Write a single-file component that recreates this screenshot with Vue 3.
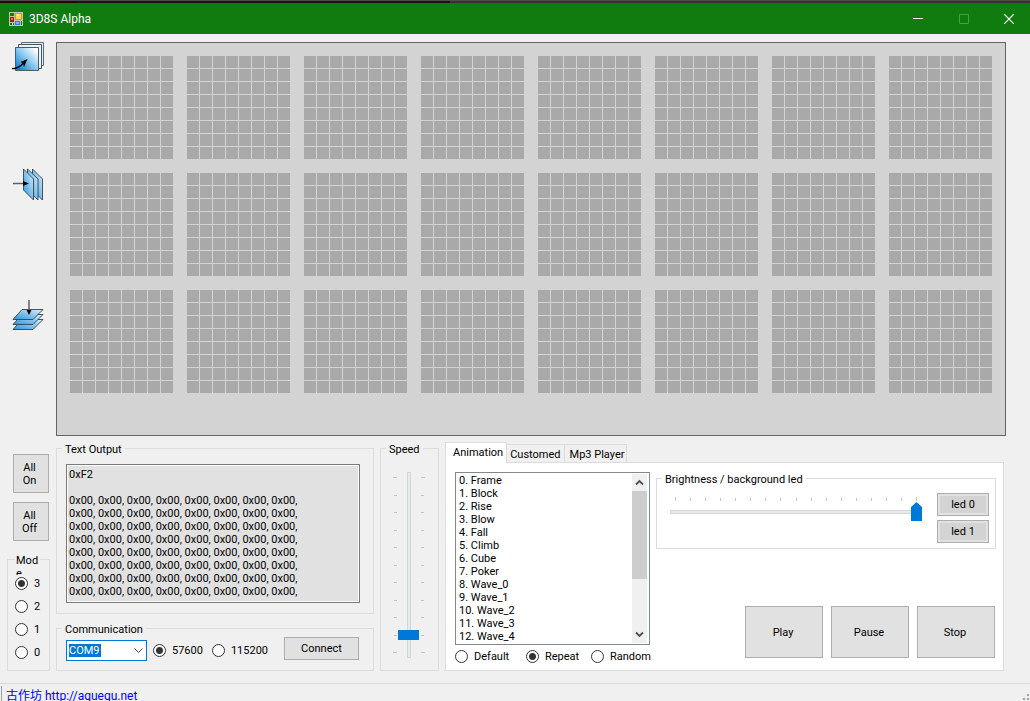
<script setup>
import { ref } from 'vue'

const matrices = Array.from({ length: 24 }, (_, i) => i)

const outputText = ['0xF2', '']
  .concat(Array.from({ length: 8 }, () => Array(8).fill('0x00,').join(' ')))
  .join('\n')

const animations = [
  'Frame', 'Block', 'Rise', 'Blow', 'Fall', 'Climb', 'Cube', 'Poker',
  'Wave_0', 'Wave_1', 'Wave_2', 'Wave_3', 'Wave_4',
]
const animation = ref(null)

const modes = ['3', '2', '1', '0']
const mode = ref('3')
const bauds = ['57600', '115200']
const baud = ref('57600')
const orders = ['Default', 'Repeat', 'Random']
const order = ref('Repeat')
const port = ref('COM9')
const speed = ref(9)
const brightness = ref(16)
const tabs = ['Animation', 'Customed', 'Mp3 Player']
const tab = ref('Animation')
</script>

<template>
  <div class="window">
    <div class="backdrop"></div>
    <header class="titlebar">
      <svg class="app-icon" width="14" height="14" viewBox="0 0 14 14" shape-rendering="crispEdges">
        <rect width="14" height="14" fill="#c4c4b4" />
        <rect x="1" y="1" width="4" height="3" fill="#107c10" />
        <rect x="6" y="1" width="7" height="7" fill="#d99a10" />
        <rect x="7" y="2" width="5" height="5" fill="#ffd84a" />
        <rect x="8" y="2" width="2" height="2" fill="#fff0a0" />
        <rect x="1" y="5" width="4" height="5" fill="#a81808" />
        <rect x="2" y="6" width="2" height="2" fill="#f07060" />
        <rect x="1" y="11" width="2" height="2" fill="#107c10" />
        <rect x="4" y="11" width="1" height="2" fill="#107c10" />
        <rect x="6" y="9" width="5" height="4" fill="#3f78d8" />
        <rect x="7" y="10" width="3" height="2" fill="#7fb0ff" />
        <rect x="12" y="9" width="1" height="4" fill="#107c10" />
      </svg>
      <h1>3D8S Alpha</h1>
      <button class="caption" aria-label="Minimize">
        <svg width="10" height="10" viewBox="0 0 10 10"><path d="M0 4.500H10" stroke="#fff" /></svg>
      </button>
      <button class="caption" aria-label="Maximize" disabled>
        <svg width="10" height="10" viewBox="0 0 10 10"><path d="M.5 .5H9.5V9.5H.5Z" fill="none" stroke="#43a043" /></svg>
      </button>
      <button class="caption" aria-label="Close">
        <svg width="10" height="10" viewBox="0 0 10 10"><path d="M0 0L10 10M10 0L0 10" stroke="#fff" stroke-width="1.2" /></svg>
      </button>
    </header>

    <main>
      <section class="stage">
        <div class="views">
          <button class="view" aria-label="Front view">
            <svg width="32" height="36" viewBox="0 0 32 36">
              <defs>
                <linearGradient id="front" x1="0" y1="1" x2="1" y2="0">
                  <stop offset="0.1" stop-color="#1586d0" /><stop offset="0.5" stop-color="#8cc8ee" /><stop offset="0.9" stop-color="#fff" />
                </linearGradient>
                <linearGradient id="side" x1="0" y1="1" x2="1" y2="0">
                  <stop offset="0" stop-color="#2a94dc" /><stop offset="1" stop-color="#dcf0fb" />
                </linearGradient>
              </defs>
              <path d="M9.500 2.500H31.500V25.500H9.500Z" fill="#d9f0f8" stroke="#5a6e78" />
              <path d="M6.500 4.500H29.500V28.500H6.500Z" fill="#e8f6fa" stroke="#4a565c" />
              <path d="M3.500 7.500H26.500V30.500H3.500Z" fill="url(#front)" stroke="#4c5c66" />
              <path d="M0 28.500C5 29 8 27 12 22.500" fill="none" stroke="#000" stroke-width="1.300" />
              <path d="M15.500 19L8.500 22L11 23.500L12 27Z" fill="#000" />
            </svg>
          </button>
          <button class="view" aria-label="Side view">
            <svg width="32" height="36" viewBox="0 0 32 36">
              <g stroke="#33434c" stroke-width="0.900">
                <path d="M20.500 1L30.500 11V32L20.500 22Z" fill="url(#side)" />
                <path d="M15.500 1L26 11V32L15.500 22Z" fill="url(#side)" />
                <path d="M11.500 1L21.500 11V32L11.500 22Z" fill="url(#side)" />
              </g>
              <path d="M1 15.500H12" stroke="#606060" stroke-width="1.500" />
              <path d="M17 15.500L11 13V18Z" fill="#000" />
            </svg>
          </button>
          <button class="view" aria-label="Top view">
            <svg width="32" height="36" viewBox="0 0 32 36">
              <g stroke="#33434c" stroke-width="0.900">
                <path d="M10 23.500H31L21 33.500H1Z" fill="url(#side)" />
                <path d="M10 18.500H31L21 28.500H1Z" fill="url(#side)" />
                <path d="M10 13.500H31L21 23.500H1Z" fill="url(#side)" />
              </g>
              <path d="M17 4V15" stroke="#606060" stroke-width="1.500" />
              <path d="M17 19L14.500 14H19.500Z" fill="#000" />
            </svg>
          </button>
        </div>
        <div class="board">
          <div v-for="m in matrices" :key="m" class="matrix"></div>
        </div>
      </section>

      <section class="controls">
        <div class="left">
          <button class="push tall">All<br />On</button>
          <button class="push tall">All<br />Off</button>
          <fieldset class="group mode">
            <legend><span>Mode</span></legend>
            <label v-for="m in modes" :key="m" class="radio">
              <input v-model="mode" type="radio" name="mode" :value="m" />{{ m }}
            </label>
          </fieldset>
        </div>

        <div class="middle">
          <fieldset class="group output">
            <legend>Text Output</legend>
            <textarea readonly aria-label="Text Output" :value="outputText"></textarea>
          </fieldset>
          <fieldset class="group comm">
            <legend>Communication</legend>
            <div class="combo">
              <select v-model="port" aria-label="Port">
                <option>COM9</option>
              </select>
              <svg width="9" height="6" viewBox="0 0 9 6"><path d="M.5 .5L4.500 4.500L8.500 .5" fill="none" stroke="#444" /></svg>
            </div>
            <label v-for="b in bauds" :key="b" class="radio">
              <input v-model="baud" type="radio" name="baud" :value="b" />{{ b }}
            </label>
            <button class="push connect">Connect</button>
          </fieldset>
        </div>

        <fieldset class="group speed">
          <legend>Speed</legend>
          <div class="ticks-v"><i v-for="n in 11" :key="n"></i></div>
          <input v-model="speed" type="range" min="0" max="10" aria-label="Speed" />
          <div class="ticks-v right"><i v-for="n in 11" :key="n"></i></div>
        </fieldset>

        <div class="player">
          <div class="tabs" role="tablist">
            <button
              v-for="t in tabs"
              :key="t"
              role="tab"
              :aria-selected="t === tab"
              :class="['tab', { active: t === tab }]"
              @click="tab = t"
            >{{ t }}</button>
          </div>
          <div class="page" role="tabpanel">
            <div class="playlist">
              <div class="listbox">
                <select v-model="animation" size="13" aria-label="Animations">
                  <option v-for="(a, i) in animations" :key="a" :value="a">{{ i }}. {{ a }}</option>
                </select>
                <div class="scrollbar" aria-hidden="true">
                  <svg width="15" height="17" viewBox="0 0 15 17"><path d="M4 10.500L7.500 7L11 10.500" fill="none" stroke="#505050" stroke-width="1.800" /></svg>
                  <div class="grab"></div>
                  <svg width="15" height="17" viewBox="0 0 15 17"><path d="M4 6.500L7.500 10L11 6.500" fill="none" stroke="#505050" stroke-width="1.800" /></svg>
                </div>
              </div>
              <div class="orders">
                <label v-for="o in orders" :key="o" class="radio">
                  <input v-model="order" type="radio" name="order" :value="o" />{{ o }}
                </label>
              </div>
            </div>
            <div class="side">
              <fieldset class="group light">
                <legend>Brightness / background led</legend>
                <div class="dimmer">
                  <div class="ticks-h"><i v-for="n in 17" :key="n"></i></div>
                  <input v-model="brightness" type="range" min="0" max="16" aria-label="Brightness" />
                </div>
                <div class="leds">
                  <button class="push led">led 0</button>
                  <button class="push led">led 1</button>
                </div>
              </fieldset>
              <div class="transport">
                <button class="push">Play</button>
                <button class="push">Pause</button>
                <button class="push">Stop</button>
              </div>
            </div>
          </div>
        </div>
      </section>
    </main>

    <footer class="status">
      <a href="http://aguegu.net">古作坊 http://aguegu.net</a>
      <svg class="grip" width="7" height="7" viewBox="0 0 7 7" fill="#a0a0a0">
        <path d="M4 0H6V2H4ZM0 4H2V6H0ZM4 4H6V6H4Z" />
      </svg>
    </footer>
  </div>
</template>

<style>
body {
  margin: 0;
}
</style>

<style scoped>
.window {
  display: flex;
  flex-direction: column;
  height: 100vh;
  overflow: hidden;
  background: #f0f0f0;
  color: #000;
  font-family: Roboto, "Noto Sans CJK SC", sans-serif;
  font-size: 11px;
  line-height: 13px;
}

.window * {
  box-sizing: border-box;
}

button,
input,
select,
textarea {
  margin: 0;
  font: inherit;
  color: inherit;
}

/* Title bar */
.backdrop {
  flex: none;
  height: 3px;
  border-top: 1px solid #4c4c4c;
  background: linear-gradient(90deg, #240a06 77px, #161616 77px, #161616 450px, #333 450px);
}

.titlebar {
  display: flex;
  align-items: center;
  flex: none;
  height: 31px;
  padding-left: 9px;
  border-top: 1px solid #2b642b;
  background: #107c10;
  color: #fff;
}

.titlebar h1 {
  flex: 1;
  margin: 0 0 0 6px;
  font-size: 12px;
  font-weight: 400;
  line-height: 16px;
}

.caption {
  display: flex;
  align-items: center;
  justify-content: center;
  width: 46px;
  height: 30px;
  padding: 0;
  border: 0;
  background: none;
}

.caption:last-child {
  width: 43px;
}

/* LED board */
.stage {
  display: flex;
  padding-right: 24px;
}

.views {
  display: flex;
  flex-direction: column;
  gap: 92px;
  width: 56px;
  padding: 6px 0 0 12px;
}

.view {
  width: 32px;
  height: 36px;
  padding: 0;
  border: 0;
  background: none;
}

.view svg {
  display: block;
}

.board {
  display: grid;
  grid-template-columns: repeat(8, 103px);
  justify-content: space-between;
  align-content: start;
  row-gap: 14px;
  flex: 1;
  margin-top: 8px;
  padding: 13px 13px 42px;
  border: 1px solid #646464;
  background: #d3d3d3;
}

.matrix {
  height: 103px;
  background:
    repeating-linear-gradient(90deg, transparent 0 12px, #d3d3d3 12px 13px),
    repeating-linear-gradient(#a9a9a9 0 12px, #d3d3d3 12px 13px);
}

/* Shared controls */
.group {
  min-width: 0;
  margin: 0;
  padding: 0;
  border: 1px solid #dcdcdc;
}

.group legend {
  height: 15px;
  margin-left: 5px;
  padding: 0 3px;
  line-height: 17px;
}

.push {
  padding: 0;
  border: 1px solid #adadad;
  background: #e1e1e1;
  text-align: center;
}

.radio {
  display: flex;
  align-items: center;
  gap: 6px;
}

.radio input {
  appearance: none;
  flex: none;
  width: 13px;
  height: 13px;
  border: 1px solid #333;
  border-radius: 50%;
  background: #fff;
}

.radio input:checked {
  background: radial-gradient(circle, #333 3px, #fff 4px);
}

input[type="range"] {
  appearance: none;
  display: block;
}

/* Lower area */
.controls {
  display: grid;
  grid-template-columns: 43px 318px 59px minmax(0, 1fr);
  column-gap: 6px;
  height: 235px;
  padding: 0 26px 0 7px;
}

.left {
  display: flex;
  flex-direction: column;
  padding-top: 18px;
}

.tall {
  width: 36px;
  height: 39px;
  margin: 0 0 9px 6px;
  padding-right: 3px;
}

.mode {
  flex: 1;
  margin-top: 2px;
  padding: 5px 0 0 7px;
}

.group.mode legend {
  margin-left: 0;
  padding: 2px 0 0 1px;
}

.mode legend span {
  display: block;
  width: 24px;
  height: 21px;
  overflow: hidden;
  line-height: 13px;
  word-break: break-all;
}

.mode .radio {
  height: 23px;
}

.middle {
  display: flex;
  flex-direction: column;
  gap: 7px;
  padding-top: 5px;
}

.output {
  flex: 1;
  padding: 8px 13px 10px 9px;
}

.group.output legend,
.group.comm legend {
  margin-left: -4px;
}

.output textarea {
  display: block;
  width: 100%;
  height: 139px;
  padding: 3px 1px 0 2px;
  border: 1px solid #7a7a7a;
  outline: 1px solid #fff;
  outline-offset: -2px;
  background: #e1e1e1;
  line-height: 13px;
  resize: none;
  overflow: hidden;
}

.comm {
  display: flex;
  align-items: center;
  height: 50px;
  padding: 4px 14px 0 9px;
}

.combo {
  position: relative;
  margin-right: 6px;
}

.combo select {
  appearance: none;
  display: block;
  width: 81px;
  height: 21px;
  padding: 0 0 0 2px;
  border: 1px solid #0078d7;
  border-radius: 0;
  background: linear-gradient(#0078d7, #0078d7) 2px 3px / 32px 13px no-repeat #fff;
  color: #fff;
}

.combo svg {
  position: absolute;
  top: 8px;
  right: 4px;
  pointer-events: none;
}

.comm .radio {
  margin-right: 9px;
}

.connect {
  width: 75px;
  height: 23px;
  margin: -4px 0 0 auto;
}

.speed {
  display: flex;
  justify-content: center;
  align-items: flex-start;
  margin-top: 5px;
  padding: 16px 2px 0 0;
}

.speed input {
  width: 21px;
  height: 186px;
  writing-mode: vertical-lr;
  background:
    linear-gradient(#e7eaea, #e7eaea) 10px 1px / 2px 184px no-repeat,
    linear-gradient(#d6d6d6, #d6d6d6) 9px 0 / 4px 186px no-repeat;
}

.speed input::-webkit-slider-thumb {
  appearance: none;
  width: 21px;
  height: 10px;
  border-radius: 0;
  background: #0078d7;
}

.ticks-v {
  display: flex;
  flex-direction: column;
  justify-content: space-between;
  align-items: flex-end;
  width: 4px;
  height: 176px;
  margin: 5px 1px 0;
}

.ticks-v.right {
  align-items: flex-start;
  margin-left: 2px;
}

.ticks-v i {
  width: 3px;
  height: 1px;
  background: #c4c4c4;
}

.ticks-v i:first-child,
.ticks-v i:last-child {
  width: 4px;
}

/* Tabs */
.player {
  display: flex;
  flex-direction: column;
  padding-top: 6px;
}

.tabs {
  display: flex;
  align-items: flex-end;
  height: 20px;
}

.tab {
  height: 18px;
  padding: 1px 3px 0;
  border: 1px solid #dcdcdc;
  border-width: 1px 1px 0 0;
  background: #f0f0f0;
  white-space: nowrap;
}

.tab:last-child {
  padding: 1px 2px 0 5px;
}

.tab.active {
  z-index: 1;
  height: 21px;
  margin-bottom: -1px;
  padding: 0 3px 2px 7px;
  border-left-width: 1px;
  background: #fff;
}

.page {
  display: flex;
  flex: 1;
  gap: 6px;
  padding: 9px 7px 7px 9px;
  border: 1px solid #dcdcdc;
  background: #fff;
}

.playlist {
  flex: none;
  width: 195px;
}

.listbox {
  display: flex;
  height: 173px;
  padding: 1px 2px 1px 1px;
  border: 1px solid #828790;
}

.listbox select {
  flex: 1;
  min-width: 0;
  height: 169px;
  padding: 0;
  border: 0;
  outline: 0;
  background: #fff;
  overflow: hidden;
  scrollbar-width: none;
}

.listbox option {
  height: 13px;
  min-height: 13px;
  padding: 0 2px;
  line-height: 13px;
}

.scrollbar {
  display: flex;
  flex-direction: column;
  width: 15px;
  background: #f0f0f0;
}

.scrollbar svg {
  flex: none;
}

.grab {
  height: 88px;
  margin-bottom: auto;
  background: #cdcdcd;
}

.orders {
  display: grid;
  grid-template-columns: 71px 65px auto;
  margin-top: 5px;
}

.side {
  display: flex;
  flex-direction: column;
  justify-content: space-between;
  flex: 1;
  min-width: 0;
}

.light {
  display: flex;
  justify-content: space-between;
  height: 78px;
  margin-top: -1px;
  padding: 7px 6px 0 13px;
}

.group.light legend {
  margin-left: -8px;
}

.dimmer {
  flex: 1;
  max-width: 252px;
  padding-top: 4px;
}

.dimmer input {
  width: 100%;
  height: 19px;
  margin-top: 1px;
  background:
    linear-gradient(#e7eaea, #e7eaea) 1px 9px / 250px 2px no-repeat,
    linear-gradient(#d6d6d6, #d6d6d6) 0 8px / 100% 4px no-repeat;
}

.dimmer input::-webkit-slider-thumb {
  appearance: none;
  width: 11px;
  height: 19px;
  border-radius: 0;
  background: #0078d7;
  clip-path: polygon(50% 0, 100% 5px, 100% 100%, 0 100%, 0 5px);
}

.ticks-h {
  display: flex;
  justify-content: space-between;
  align-items: flex-end;
  height: 4px;
  padding: 0 5px;
}

.ticks-h i {
  width: 1px;
  height: 3px;
  background: #c4c4c4;
}

.ticks-h i:first-child,
.ticks-h i:last-child {
  height: 4px;
}

.leds {
  display: flex;
  flex-direction: column;
  gap: 4px;
}

.led {
  width: 52px;
  height: 23px;
  background: #d3d3d3;
  box-shadow: inset 0 0 0 2px #e1e1e1;
}

.transport {
  display: flex;
  justify-content: flex-end;
  gap: 8px;
  padding: 0 1px 5px 0;
}

.transport .push {
  width: 78px;
  height: 52px;
  padding-right: 2px;
}

/* Status bar */
.status {
  display: flex;
  justify-content: space-between;
  flex: none;
  margin-top: 12px;
  padding: 2px 0 0 1px;
  border-top: 1px solid #d7d7d7;
}

.status a {
  height: 20px;
  padding: 3px 0 0 4px;
  border-left: 1px solid #a0a0a0;
  color: #00f;
  font-size: 12px;
  line-height: 14px;
  text-decoration: none;
}

.grip {
  margin-top: 8px;
}
</style>
